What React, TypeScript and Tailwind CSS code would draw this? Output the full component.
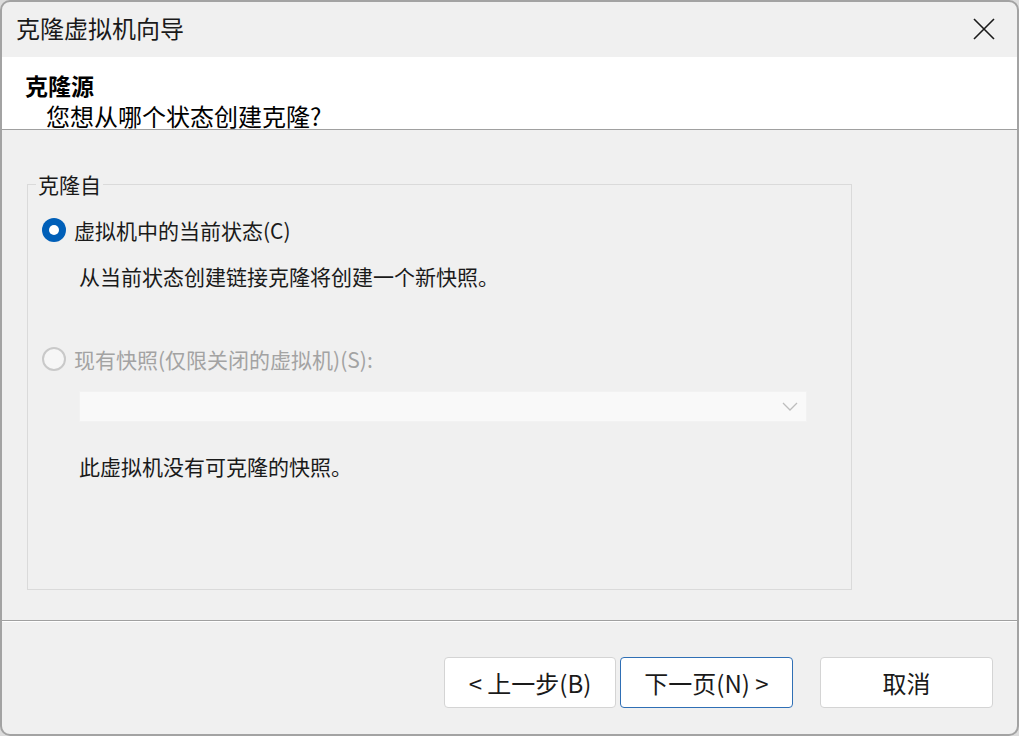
import React from "react";

const font = { fontFamily: '"Noto Sans CJK SC", "Noto Sans", sans-serif' };

function Radio({ checked, disabled }: { checked?: boolean; disabled?: boolean }) {
  if (checked) {
    return (
      <span className="flex h-[24px] w-[24px] shrink-0 items-center justify-center rounded-full bg-[#005fb8]">
        <span className="h-[10px] w-[10px] rounded-full bg-white" />
      </span>
    );
  }
  return (
    <span
      className={
        "h-[24px] w-[24px] shrink-0 rounded-full border-2 " +
        (disabled ? "border-[#c9c9c9] bg-[#f6f6f6]" : "border-[#8a8a8a] bg-white")
      }
    />
  );
}

export default function App() {
  return (
    <div className="h-[736px] w-[1019px] bg-[#dcdcdc]" style={font}>
      <div className="flex h-[736px] w-[1019px] flex-col overflow-hidden rounded-[10px] border-2 border-[#a3a3a3] bg-[#f0f0f0] text-[#1a1a1a]">
        {/* title bar */}
        <div className="flex h-[55px] shrink-0 items-center justify-between pb-[3px] pl-[14px] pr-[22px]">
          <span className="text-[24px] leading-[28px]">克隆虚拟机向导</span>
          <svg width="22" height="22" viewBox="0 0 22 22" className="mt-[2px]">
            <path d="M1 1 L21 21 M21 1 L1 21" stroke="#1a1a1a" strokeWidth="1.6" fill="none" />
          </svg>
        </div>
        {/* header */}
        <div className="h-[72px] shrink-0 bg-white pl-[23px] pt-[14px]">
          <div className="text-[23px] font-bold leading-[28px] text-black">克隆源</div>
          <div className="mt-[5px] pl-[21px] text-[24px] leading-[24px] text-black">您想从哪个状态创建克隆?</div>
        </div>
        <div className="h-px shrink-0 bg-[#a0a0a0]" />
        {/* body */}
        <div className="flex h-[490px] shrink-0 flex-col pl-[25px]">
          <fieldset className="mt-[40px] h-[420px] w-[825px] border border-[#dadada] pl-[14px]">
            <legend className="ml-[-6px] px-[2px] text-[21px] leading-[28px]">克隆自</legend>
            <div className="mt-[18px] flex h-[28px] items-center gap-[8px]">
              <Radio checked />
              <span className="text-[21px] leading-[28px]">虚拟机中的当前状态(C)</span>
            </div>
            <div className="mt-[18px] pl-[37px] text-[21px] leading-[28px]">从当前状态创建链接克隆将创建一个新快照。</div>
            <div className="mt-[55px] flex h-[28px] items-center gap-[8px]">
              <Radio disabled />
              <span className="text-[21px] leading-[28px] text-[#a3a3a3]">现有快照(仅限关闭的虚拟机)(S):</span>
            </div>
            <div className="ml-[37px] mt-[18px] flex h-[31px] w-[728px] items-center justify-end border border-[#f2f2f2] bg-[#f9f9f9] pr-[8px]">
              <svg width="16" height="10" viewBox="0 0 16 10">
                <path d="M1 1 L8 8 L15 1" stroke="#bdbdbd" strokeWidth="1.3" fill="none" />
              </svg>
            </div>
            <div className="mt-[30px] pl-[37px] text-[21px] leading-[28px]">此虚拟机没有可克隆的快照。</div>
          </fieldset>
        </div>
        <div className="h-px shrink-0 bg-[#a0a0a0]" />
        <div className="h-px shrink-0 bg-white" />
        {/* footer */}
        <div className="flex flex-1 items-start justify-end pr-[24px] pt-[35px]">
          <button className="flex h-[51px] w-[172px] items-center justify-center rounded-[4px] border border-[#d4d4d4] bg-white text-[24px] leading-[28px] text-[#1a1a1a]">
            &lt; 上一步(B)
          </button>
          <button className="ml-[4px] flex h-[51px] w-[173px] items-center justify-center rounded-[4px] border border-[#2f6fb5] bg-white text-[24px] leading-[28px] text-[#1a1a1a]">
            下一页(N) &gt;
          </button>
          <button className="ml-[27px] flex h-[51px] w-[173px] items-center justify-center rounded-[4px] border border-[#d4d4d4] bg-white text-[24px] leading-[28px] text-[#1a1a1a]">
            取消
          </button>
        </div>
      </div>
    </div>
  );
}
